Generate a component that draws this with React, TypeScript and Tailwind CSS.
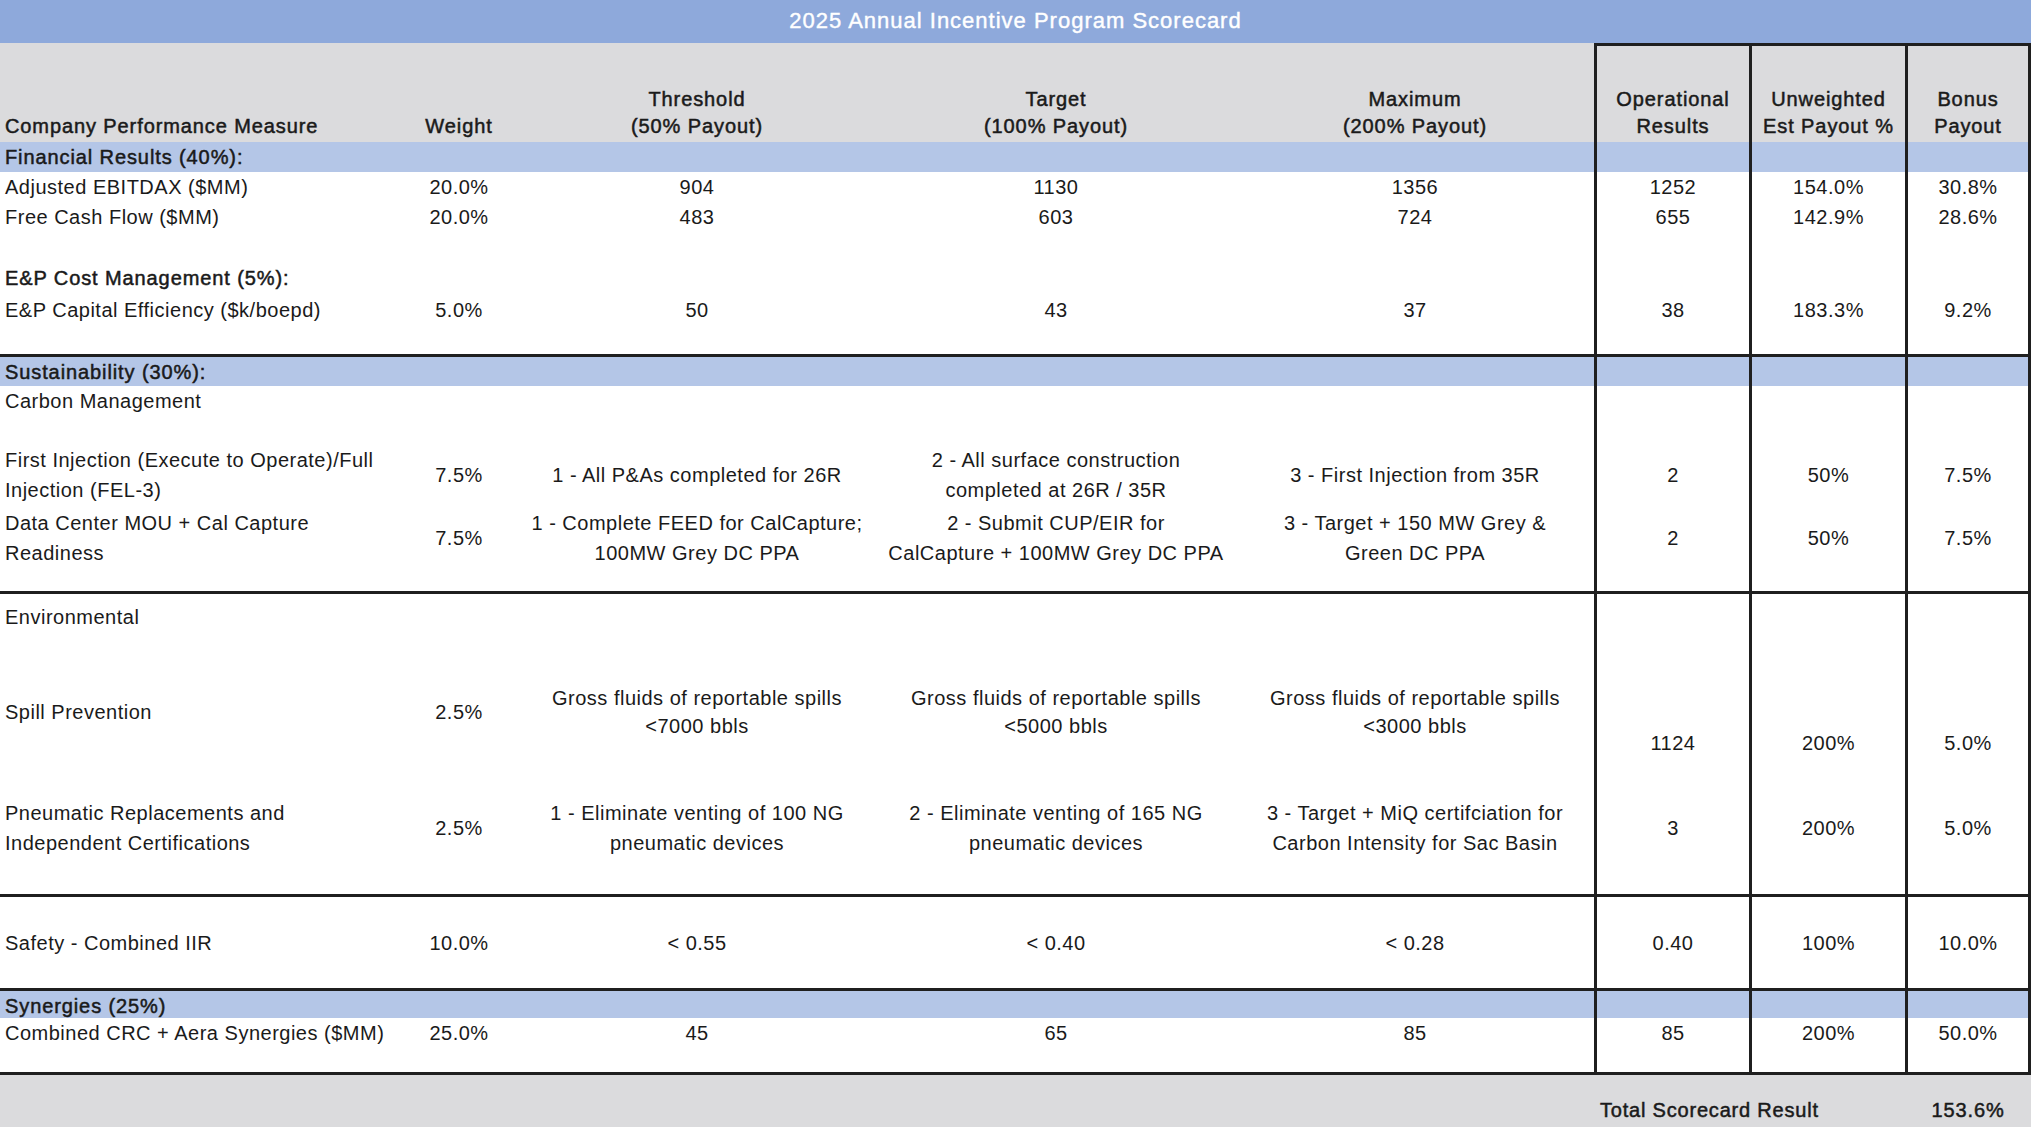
import React from "react";

const COLS = "grid grid-cols-[400px_118px_358px_360px_358px_155px_156px_126px]";
const VL = "border-l-[3px] border-[#1f1f1f]";
const VR = "border-r-[3px]";
const MED = "[-webkit-text-stroke:0.5px_currentColor] tracking-[0.9px]";

type Cells = React.ReactNode[];

function Row({
  hc,
  cells = [],
  band = false,
  med = false,
  rightCls = "items-center",
  midCls = "items-center",
  lead = "leading-[30px]",
}: {
  hc: string;
  cells?: Cells;
  band?: boolean;
  med?: boolean;
  rightCls?: string;
  midCls?: string;
  lead?: string;
}) {
  const bg = band ? "bg-[#B4C6E7]" : "bg-white";
  return (
    <div className={`${COLS} ${hc} ${bg} ${lead}`}>
      <div className={`flex items-center pl-[5px] whitespace-nowrap ${med ? MED : ""}`}>{cells[0]}</div>
      <div className={`flex justify-center text-center whitespace-nowrap ${midCls}`}>{cells[1]}</div>
      <div className={`flex justify-center text-center whitespace-nowrap ${midCls}`}>{cells[2]}</div>
      <div className={`flex justify-center text-center whitespace-nowrap ${midCls}`}>{cells[3]}</div>
      <div className={`flex justify-center text-center whitespace-nowrap ${midCls}`}>{cells[4]}</div>
      <div className={`flex justify-center text-center whitespace-nowrap ${VL} ${rightCls}`}>{cells[5]}</div>
      <div className={`flex justify-center text-center whitespace-nowrap ${VL} ${rightCls}`}>{cells[6]}</div>
      <div className={`flex justify-center text-center whitespace-nowrap ${VL} ${VR} ${rightCls}`}>{cells[7]}</div>
    </div>
  );
}

function Line() {
  return <div className="h-[3px] w-full bg-[#1f1f1f]" />;
}

function Header() {
  const cell = "flex items-end justify-center text-center pb-[2px] leading-[27px] whitespace-nowrap";
  return (
    <div className={`${COLS} h-[99px] bg-[#DBDBDD] ${MED}`}>
      <div className="flex items-end pl-[5px] pb-[2px] leading-[27px] whitespace-nowrap">Company Performance Measure</div>
      <div className={cell}>Weight</div>
      <div className={cell}>
        Threshold
        <br />
        (50% Payout)
      </div>
      <div className={cell}>
        Target
        <br />
        (100% Payout)
      </div>
      <div className={cell}>
        Maximum
        <br />
        (200% Payout)
      </div>
      <div className={`${cell} ${VL} border-t-[3px]`}>
        Operational
        <br />
        Results
      </div>
      <div className={`${cell} ${VL} border-t-[3px]`}>
        Unweighted
        <br />
        Est Payout %
      </div>
      <div className={`${cell} ${VL} ${VR} border-t-[3px]`}>
        Bonus
        <br />
        Payout
      </div>
    </div>
  );
}

function Two({ a, b }: { a: string; b: string }) {
  return (
    <span>
      {a}
      <br />
      {b}
    </span>
  );
}

export default function App() {
  return (
    <div className="w-[2031px] h-[1127px] overflow-hidden bg-white text-[20px] tracking-[0.5px] text-[#1a1a1a] font-['Liberation_Sans',Arial,sans-serif]">
      <div className="h-[43px] bg-[#8EA9DB] flex items-center justify-center text-white text-[22px] tracking-[1px] [-webkit-text-stroke:0.4px_currentColor] pb-[2px]">
        2025 Annual Incentive Program Scorecard
      </div>
      <Header />

      {/* Financial Results */}
      <Row hc="h-[30px]" band med cells={["Financial Results (40%):"]} />
      <Row hc="h-[30px]" cells={["Adjusted EBITDAX ($MM)", "20.0%", "904", "1130", "1356", "1252", "154.0%", "30.8%"]} />
      <Row hc="h-[30px]" cells={["Free Cash Flow ($MM)", "20.0%", "483", "603", "724", "655", "142.9%", "28.6%"]} />
      <Row hc="h-[31px]" />
      <Row hc="h-[30px]" med cells={["E&P Cost Management (5%):"]} />
      <Row hc="h-[34px]" cells={["E&P Capital Efficiency ($k/boepd)", "5.0%", "50", "43", "37", "38", "183.3%", "9.2%"]} />
      <Row hc="h-[27px]" />
      <Line />

      {/* Sustainability */}
      <Row hc="h-[29px]" band med cells={["Sustainability (30%):"]} />
      <Row hc="h-[30px]" cells={["Carbon Management"]} />
      <Row hc="h-[27px]" />
      <Row
        hc="h-[63px]"
        cells={[
          <Two key="a" a="First Injection (Execute to Operate)/Full" b="Injection (FEL-3)" />,
          "7.5%",
          "1 - All P&As completed for 26R",
          <Two key="b" a="2 - All surface construction" b="completed at 26R / 35R" />,
          "3 - First Injection from 35R",
          "2",
          "50%",
          "7.5%",
        ]}
      />
      <Row
        hc="h-[64px]"
        cells={[
          <Two key="a" a="Data Center MOU + Cal Capture" b="Readiness" />,
          "7.5%",
          <Two key="b" a="1 - Complete FEED for CalCapture;" b="100MW Grey DC PPA" />,
          <Two key="c" a="2 - Submit CUP/EIR for" b="CalCapture + 100MW Grey DC PPA" />,
          <Two key="d" a="3 - Target + 150 MW Grey &" b="Green DC PPA" />,
          "2",
          "50%",
          "7.5%",
        ]}
      />
      <Row hc="h-[21px]" />
      <Line />

      {/* Environmental */}
      <Row hc="h-[46px]" cells={["Environmental"]} />
      <Row
        hc="h-[144px]"
        lead="leading-[28px]"
        rightCls="items-start pt-[88px] leading-[30px]"
        cells={[
          "Spill Prevention",
          "2.5%",
          <Two key="a" a="Gross fluids of reportable spills" b="<7000 bbls" />,
          <Two key="b" a="Gross fluids of reportable spills" b="<5000 bbls" />,
          <Two key="c" a="Gross fluids of reportable spills" b="<3000 bbls" />,
          "1124",
          "200%",
          "5.0%",
        ]}
      />
      <Row
        hc="h-[88px]"
        cells={[
          <Two key="a" a="Pneumatic Replacements and" b="Independent Certifications" />,
          "2.5%",
          <Two key="b" a="1 - Eliminate venting of 100 NG" b="pneumatic devices" />,
          <Two key="c" a="2 - Eliminate venting of 165 NG" b="pneumatic devices" />,
          <Two key="d" a="3 - Target + MiQ certifciation for" b="Carbon Intensity for Sac Basin" />,
          "3",
          "200%",
          "5.0%",
        ]}
      />
      <Row hc="h-[22px]" />
      <Line />

      {/* Safety */}
      <Row hc="h-[91px]" cells={["Safety - Combined IIR", "10.0%", "< 0.55", "< 0.40", "< 0.28", "0.40", "100%", "10.0%"]} />
      <Line />

      {/* Synergies */}
      <Row hc="h-[27px]" band med cells={["Synergies (25%)"]} />
      <Row hc="h-[30px]" cells={["Combined CRC + Aera Synergies ($MM)", "25.0%", "45", "65", "85", "85", "200%", "50.0%"]} />
      <Row hc="h-[24px]" />
      <Line />

      {/* Footer */}
      <div className={`${COLS} h-[52px] bg-[#DBDBDD] leading-[30px] ${MED}`}>
        <div />
        <div />
        <div />
        <div />
        <div />
        <div className="flex items-end pl-[6px] pb-[2px] whitespace-nowrap tracking-[0.8px]">Total Scorecard Result</div>
        <div />
        <div className="flex items-end justify-center pb-[2px] whitespace-nowrap">153.6%</div>
      </div>
    </div>
  );
}
